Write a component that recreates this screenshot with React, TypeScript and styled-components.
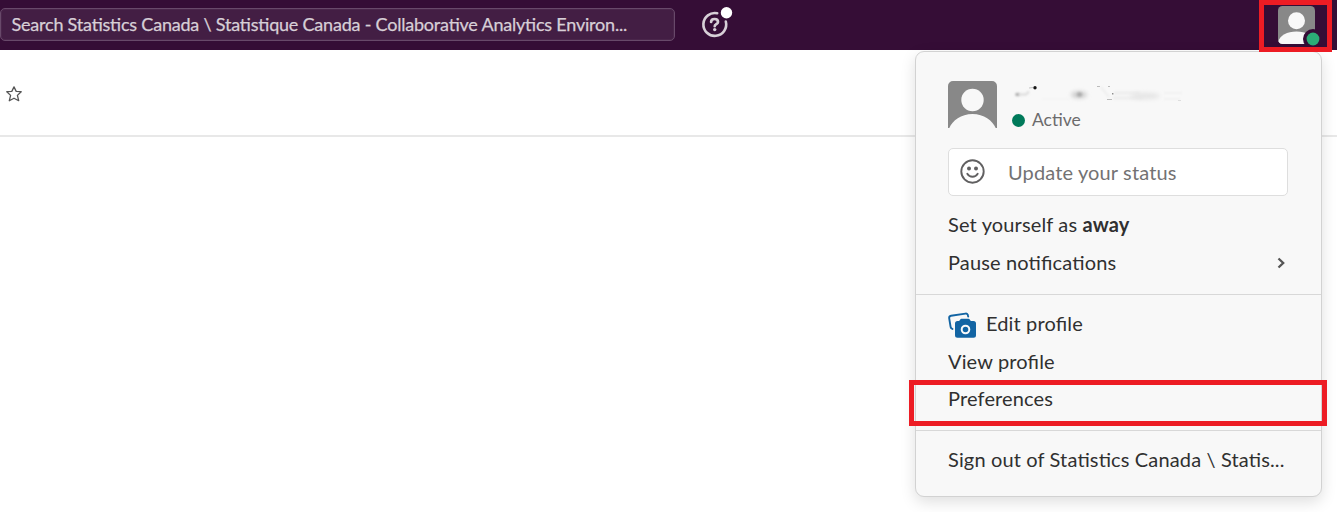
import React from "react";
import styled, { createGlobalStyle } from "styled-components";

const GlobalStyle = createGlobalStyle`
  * { box-sizing: border-box; }
  html, body { margin: 0; background: #fff; }
  body {
    font-family: Lato, "Liberation Sans", sans-serif;
    font-feature-settings: "liga" 1, "kern" 1;
    overflow: hidden;
  }
`;

const Page = styled.div`
  position: relative;
  height: 512px;
  overflow: hidden;
`;

const TopBar = styled.header`
  display: flex;
  align-items: flex-start;
  height: 50px;
  background: #350d36;
`;

const SearchBox = styled.div`
  width: 675px;
  height: 33px;
  margin-top: 8px;
  padding-left: 10.5px;
  border: 1px solid #68496a;
  border-radius: 5px;
  background: #431e44;
  box-shadow: inset 0 0 0 1px #4a264b;
  color: #d7cfd7;
  font-size: 18px;
  line-height: 30px;
  white-space: nowrap;
  -webkit-text-stroke: 0.25px #d7cfd7;
`;

const Label = styled.span<{ $spacing?: number }>`
  letter-spacing: ${(p) => p.$spacing ?? 0.14}px;
  white-space: nowrap;
`;

const HelpButton = styled.div`
  width: 34px;
  height: 34px;
  margin: 6px 0 0 25px;
  svg { display: block; }
`;

const UserButton = styled.div`
  width: 44px;
  height: 42px;
  margin: 6px 15px 0 auto;
  svg { display: block; }
`;

const ChannelHeader = styled.div`
  display: flex;
  height: 87px;
  padding: 36px 0 0 6px;
  border-bottom: 2px solid #e8e8e8;
`;

const Menu = styled.section`
  position: absolute;
  top: 51px;
  left: 915px;
  width: 407px;
  height: 446px;
  border: 1px solid #d2d2d2;
  border-radius: 9px;
  background: #f8f8f8;
  box-shadow: 0 5px 15px rgba(0, 0, 0, 0.13);
  color: #303030;
  font-size: 20px;
`;

const Profile = styled.div`
  display: flex;
  height: 96px;
  padding: 29px 32px 0;
`;

const ProfileText = styled.div`
  display: flex;
  flex-direction: column;
  margin-left: 15px;
`;

const Presence = styled.div`
  display: flex;
  align-items: center;
  gap: 7px;
  height: 24px;
  color: #6c6b6c;
  font-size: 17.5px;
`;

const Dot = styled.i`
  width: 13px;
  height: 13px;
  margin-top: 3px;
  border-radius: 50%;
  background: #007a5a;
`;

const StatusField = styled.div`
  display: flex;
  align-items: center;
  gap: 21px;
  width: 340px;
  height: 48px;
  margin: 0 0 9px 32px;
  padding: 0 0 1px 10px;
  border: 1px solid #dedede;
  border-radius: 5px;
  background: #fff;
  color: #737273;
`;

const MenuItem = styled.div<{ $height?: number }>`
  display: flex;
  align-items: center;
  height: ${(p) => p.$height ?? 38}px;
  padding: 0 34px 0 32px;
  white-space: pre;
  svg { flex: none; }
`;

const Chevron = styled.svg`
  margin: 2px 1px 0 auto;
`;

const Divider = styled.hr<{ $top: number; $bottom: number }>`
  height: 1px;
  margin: ${(p) => p.$top}px 0 ${(p) => p.$bottom}px;
  border: 0;
  background: #d8d8d8;
`;

const Highlight = styled.div<{ $x: number; $y: number; $w: number; $h: number }>`
  position: absolute;
  left: ${(p) => p.$x}px;
  top: ${(p) => p.$y}px;
  width: ${(p) => p.$w}px;
  height: ${(p) => p.$h}px;
  border: 5px solid #ed1c24;
`;

function HelpIcon() {
  return (
    <svg width="34" height="34" viewBox="700 6 34 34" fill="none">
      <path d="M717.2 13.300a11.400 11.400 0 1 0 8.600 8.200" stroke="#d7cfd7" strokeWidth="2.6" strokeLinecap="round" />
      <path d="M711.1 22c0-2 1.500-3 3.500-3s3.400 1.100 3.400 2.900c0 2.100-3.300 2.200-3.300 4.300" stroke="#d7cfd7" strokeWidth="2.700" strokeLinecap="round" strokeLinejoin="round" />
      <circle cx="714.7" cy="29.6" r="1.700" fill="#d7cfd7" />
      <circle cx="726.5" cy="12.7" r="5.7" fill="#fff" />
    </svg>
  );
}

function TopAvatar() {
  return (
    <svg width="44" height="42" viewBox="1278 6 44 42">
      <defs>
        <clipPath id="topAvatar"><rect x="1278" y="6" width="37" height="38" rx="4.5" /></clipPath>
      </defs>
      <g clipPath="url(#topAvatar)">
        <rect x="1278" y="6" width="37" height="38" fill="#888" />
        <circle cx="1296.5" cy="20.7" r="8.5" fill="#f8f8f8" />
        <path d="M1278 44v-2c2-6.500 9-10.500 18.500-10.500S1313 35.500 1315 42v2z" fill="#f8f8f8" />
      </g>
      <circle cx="1313" cy="39" r="10" fill="#350d36" />
      <circle cx="1313" cy="39" r="6.400" fill="#2bac76" />
    </svg>
  );
}

function ProfileAvatar() {
  return (
    <svg width="49" height="49" viewBox="0 0 49 49">
      <path d="M5 0h39a5 5 0 0 1 5 5v42h-1.300C44.500 39.500 36 33 24.500 33S4.500 39.500 1.300 47H0V5a5 5 0 0 1 5-5z" fill="#888" />
      <circle cx="24.500" cy="19" r="11.200" fill="#f8f8f8" />
    </svg>
  );
}

function RedactedName() {
  return (
    <svg width="172" height="26" viewBox="1012 81 172 26">
      <defs>
        <filter id="soft" filterUnits="userSpaceOnUse" x="1000" y="70" width="200" height="50"><feGaussianBlur stdDeviation="1.200" /></filter>
        <filter id="softer" filterUnits="userSpaceOnUse" x="1000" y="70" width="200" height="50"><feGaussianBlur stdDeviation="2" /></filter>
      </defs>
      <ellipse cx="1017.500" cy="94.500" rx="2.300" ry="1.700" fill="#aaa" filter="url(#soft)" />
      <path d="M1019 94.500h7l3-3" stroke="#dadada" strokeWidth="2" fill="none" filter="url(#soft)" />
      <circle cx="1035" cy="87.800" r="1.700" fill="#151515" />
      <path d="M1029 88l4-.5" stroke="#c4c4c4" />
      <ellipse cx="1079" cy="94.700" rx="8" ry="3.500" fill="#ccc" filter="url(#softer)" />
      <ellipse cx="1079.500" cy="94.500" rx="2.600" ry="2.200" fill="#aaa" filter="url(#soft)" />
      <path d="M1042 99h28" stroke="#f4f4f4" strokeWidth="2" filter="url(#soft)" />
      <path d="M1097 86.500h3M1108 86.500h2M1107 99.500h5" stroke="#bbb" />
      <path d="M1101 87l8 10" stroke="#ededed" strokeWidth="2" filter="url(#soft)" />
      <rect x="1112" y="93" width="1.500" height="1.500" fill="#888" />
      <path d="M1114 93h26M1113 98h30" stroke="#ededed" strokeWidth="3" fill="none" filter="url(#soft)" />
      <ellipse cx="1145" cy="96" rx="15" ry="3.500" fill="#e6e6e6" filter="url(#softer)" />
      <path d="M1164 93h18M1164 99h16" stroke="#f1f1f1" strokeWidth="2" filter="url(#soft)" />
      <path d="M1178 100.500h3" stroke="#dedede" />
    </svg>
  );
}

export default function App() {
  return (
    <Page>
      <GlobalStyle />
      <TopBar>
        <SearchBox>
          <Label $spacing={-0.21}>Search Statistics Canada \ Statistique Canada - Collaborative Analytics Environ...</Label>
        </SearchBox>
        <HelpButton><HelpIcon /></HelpButton>
        <UserButton><TopAvatar /></UserButton>
      </TopBar>
      <ChannelHeader>
        <svg width="16" height="16" viewBox="0 0 16 16" fill="none">
          <path d="M8 .9l2.200 4.500 5 .3-3.800 3.700 1.300 5.300L8 12.200l-4.700 2.500 1.300-5.300L.8 5.700l5-.3z" stroke="#555" strokeWidth="1.300" strokeLinejoin="round" />
        </svg>
      </ChannelHeader>
      <Menu>
        <Profile>
          <ProfileAvatar />
          <ProfileText>
            <RedactedName />
            <Presence><Dot /><Label $spacing={0}>Active</Label></Presence>
          </ProfileText>
        </Profile>
        <StatusField>
          <svg width="28" height="28" viewBox="0.5 0.5 28 28" fill="none">
            <circle cx="14" cy="14" r="11.200" stroke="#616061" strokeWidth="1.900" />
            <circle cx="10.500" cy="11" r="2" fill="#616061" />
            <circle cx="17.500" cy="11" r="2" fill="#616061" />
            <path d="M8.800 16.200c1.200 2 3 3 5.200 3s4-1 5.200-3" stroke="#616061" strokeWidth="1.900" strokeLinecap="round" />
          </svg>
          <Label>Update your status</Label>
        </StatusField>
        <MenuItem><Label>Set yourself as <b>away</b></Label></MenuItem>
        <MenuItem>
          <Label>Pause notifications</Label>
          <Chevron width="10" height="12" viewBox="0 0 10 12" fill="none">
            <path d="M2.500 1.500L7.200 6l-4.700 4.500" stroke="#555" strokeWidth="2.300" />
          </Chevron>
        </MenuItem>
        <Divider $top={13} $bottom={9} />
        <MenuItem>
          <svg width="38" height="28" viewBox="948 308 38 28" fill="none" overflow="visible">
            <path d="M952.500 328l-.8-.5c-.7-.4-1-1-1.100-1.700l-1.400-8.500c-.2-1.300.5-2.300 1.800-2.500l14.500-2.200c1.300-.2 2.300.6 2.500 1.900l.2 1" stroke="#1264a3" strokeWidth="1.900" strokeLinecap="round" />
            <path d="M957.500 320h1.500c1 0 1.200-2.200 2.500-2.200h7c1.300 0 1.500 2.200 2.500 2.200h2.500a2.500 2.500 0 0 1 2.500 2.500v11.700a2.500 2.500 0 0 1-2.500 2.500h-16a2.500 2.500 0 0 1-2.500-2.500v-11.700a2.500 2.500 0 0 1 2.500-2.500z" fill="#1264a3" />
            <circle cx="965.500" cy="328.500" r="3.800" stroke="#f8f8f8" strokeWidth="2" />
          </svg>
          <Label>Edit profile</Label>
        </MenuItem>
        <MenuItem $height={37}><Label>View profile</Label></MenuItem>
        <MenuItem $height={37}><Label>Preferences</Label></MenuItem>
        <Divider $top={14} $bottom={9} />
        <MenuItem><Label>Sign out of Statistics Canada \ Statis...</Label></MenuItem>
      </Menu>
      <Highlight $x={1259} $y={0} $w={73} $h={52} />
      <Highlight $x={909} $y={380} $w={418} $h={46} />
    </Page>
  );
}
